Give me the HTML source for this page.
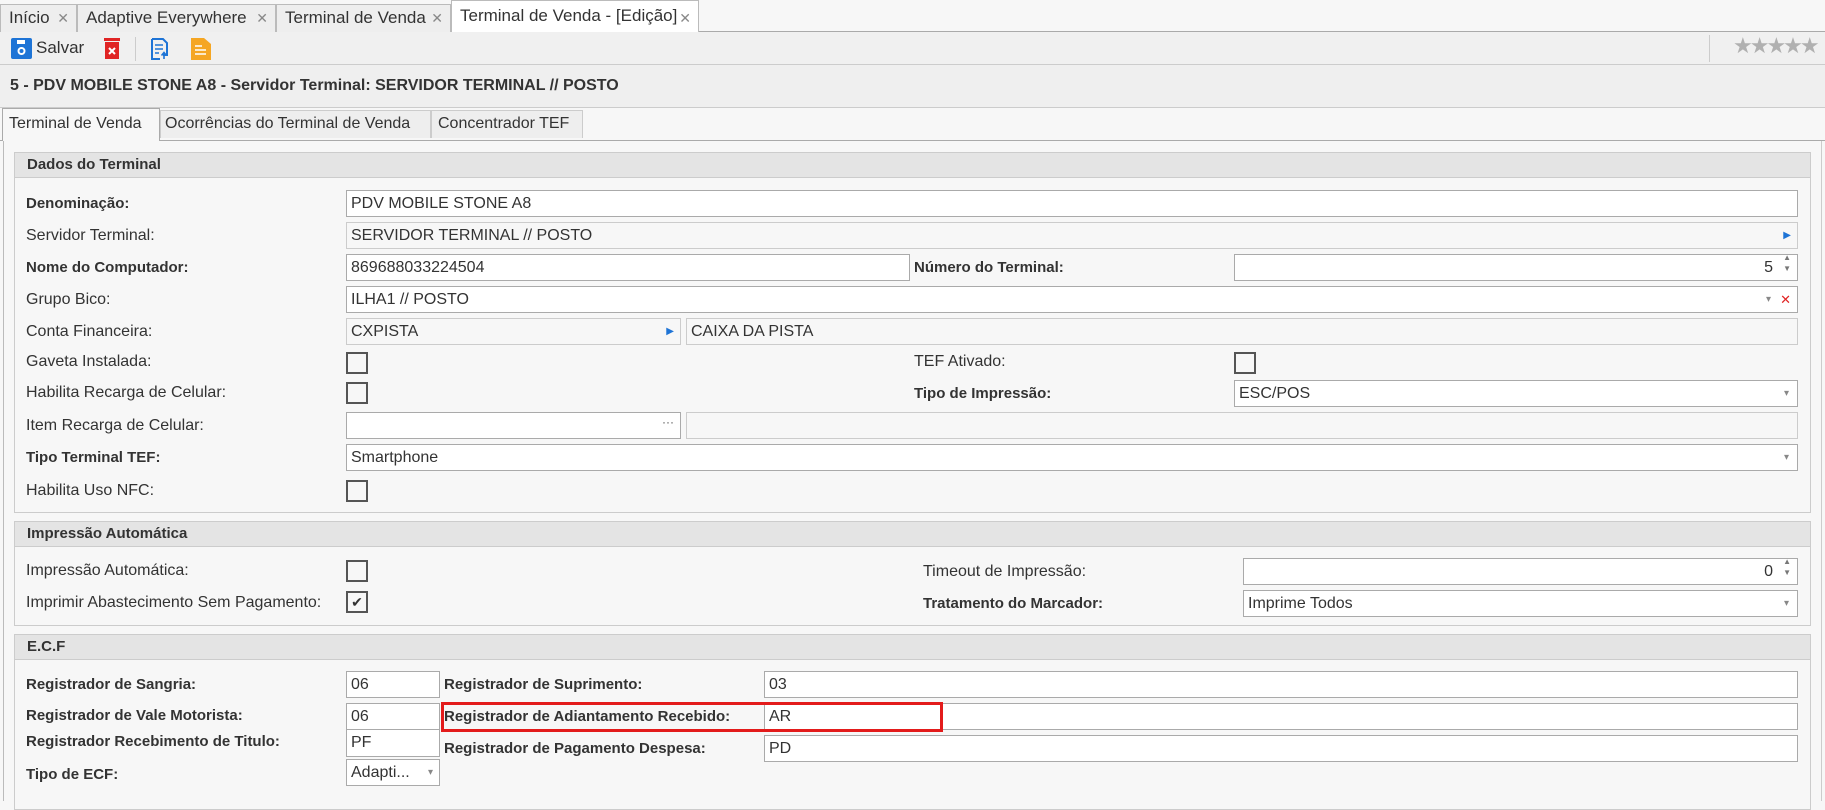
<!DOCTYPE html>
<html><head><meta charset="utf-8"><style>
*{box-sizing:border-box;margin:0;padding:0}
body{width:1825px;height:798px;overflow:hidden;background:#f7f7f7;font-family:"Liberation Sans",sans-serif;color:#333;position:relative;font-size:16px}
.a{position:absolute}
.t{position:absolute;white-space:nowrap;line-height:20px}
.b{font-weight:bold;font-size:15px}
.in{position:absolute;background:#fff;border:1px solid #aaa;height:27px;line-height:25px;padding-left:4px;white-space:nowrap;overflow:hidden}
.ro{background:#f7f7f7;border-color:#ccc}
.cb{position:absolute;width:22px;height:22px;border:2px solid #555;background:#f7f7f7}
.gh{position:absolute;left:14px;width:1797px;background:#e4e4e4;border:1px solid #ccc;height:26px;line-height:24px;padding-left:12px;font-weight:bold;font-size:15px}
.gb{position:absolute;left:14px;width:1797px;border:1px solid #ccc;border-top:none}
.tab{position:absolute;top:4px;height:28px;border:1px solid #bbb;border-bottom:none;background:#eee;line-height:26px;padding-left:8px;font-size:17px;white-space:nowrap}
.x{position:absolute;right:7px;top:0;color:#888;font-size:14px}
.dd{position:absolute;right:8px;top:0;color:#888;font-size:10px}
.st{position:absolute;top:36px;height:28px;border:1px solid #ccc;border-bottom:none;background:#eee;line-height:26px;padding:0 6px;font-size:16px;white-space:nowrap;overflow:hidden}
</style></head><body>
<div class="a" style="left:0;top:0;width:1825px;height:32px;background:#f7f7f7;border-bottom:1px solid #aaa"></div>
<div class="tab" style="left:0;width:77px">Início<span class="x">✕</span></div>
<div class="tab" style="left:77px;width:199px">Adaptive Everywhere<span class="x">✕</span></div>
<div class="tab" style="left:276px;width:175px">Terminal de Venda<span class="x">✕</span></div>
<div class="tab" style="left:451px;top:0;height:33px;width:248px;background:#fff;line-height:30px">Terminal de Venda - [Edição]<span class="x" style="top:2px">✕</span></div>
<div class="a" style="left:0;top:32px;width:1825px;height:33px;background:#f0f0f0;border-bottom:1px solid #ccc"></div>
<svg class="a" style="left:11px;top:38px" width="21" height="21"><rect x="0" y="0" width="21" height="21" rx="2" fill="#1e74d6"/><rect x="6" y="2" width="8" height="4" fill="#fff"/><circle cx="10.5" cy="13" r="3" fill="none" stroke="#fff" stroke-width="2"/></svg>
<div class="t" style="left:36px;top:38px;font-size:17px">Salvar</div>
<svg class="a" style="left:104px;top:38px" width="16" height="21"><rect x="0" y="0" width="16" height="3" fill="#e02424"/><rect x="1" y="4" width="14" height="17" fill="#e02424"/><path d="M5 10l6 6M11 10l-6 6" stroke="#fff" stroke-width="2"/></svg>
<div class="a" style="left:135px;top:37px;width:1px;height:24px;background:#ccc"></div>
<svg class="a" style="left:151px;top:38px" width="18" height="22"><path d="M1 1h11l4 4v12h-4M1 1v20h8" fill="none" stroke="#1e74d6" stroke-width="2"/><path d="M4 7h8M4 11h8M4 15h4M13 21v-6M10.5 17.5l2.5-3 2.5 3" fill="none" stroke="#1e74d6" stroke-width="1.6"/></svg>
<svg class="a" style="left:191px;top:38px" width="20" height="22"><path d="M0 0h13l7 6v16H0z" fill="#f5a623"/><path d="M4 8h7M4 12h11M4 16h11" stroke="#fff" stroke-width="1.6"/></svg>
<div class="a" style="left:1709px;top:35px;width:1px;height:27px;background:#ccc"></div>
<div class="t" style="left:1733px;top:37px;color:#b0b0b0;font-size:22px;letter-spacing:-3px;font-family:'DejaVu Sans',sans-serif">★★★★★</div>
<div class="a" style="left:0;top:65px;width:1825px;height:43px;background:#efefef;border-bottom:1px solid #ccc"></div>
<div class="t" style="left:10px;top:76px;font-weight:bold;font-size:16px">5 - PDV MOBILE STONE A8 - Servidor Terminal: SERVIDOR TERMINAL // POSTO</div>
<div class="a" style="left:0;top:108px;width:1825px;height:33px;background:#f7f7f7;border-bottom:1px solid #aaa"></div>
<div class="a" style="left:0;top:108px;width:1825px;height:32px">
<div class="st" style="left:2px;top:0;height:33px;width:158px;background:#f7f7f7;border-color:#aaa;line-height:30px">Terminal de Venda</div>
<div class="st" style="left:160px;top:2px;width:271px;padding:0 4px">Ocorrências do Terminal de Venda</div>
<div class="st" style="left:431px;top:2px;width:152px">Concentrador TEF</div>
</div>
<div class="a" style="left:3px;top:141px;width:1819px;height:660px;border-left:1px solid #bbb;border-right:1px solid #ccc"></div>

<div class="gh" style="top:152px">Dados do Terminal</div>
<div class="gb" style="top:178px;height:335px"></div>
<div class="t b" style="left:26px;top:194px">Denominação:</div>
<div class="in" style="left:346px;top:190px;width:1452px">PDV MOBILE STONE A8</div>
<div class="t" style="left:26px;top:226px">Servidor Terminal:</div>
<div class="in ro" style="left:346px;top:222px;width:1452px">SERVIDOR TERMINAL // POSTO<span class="a" style="right:6px;top:0;color:#1e74d6;font-size:10px">▶</span></div>
<div class="t b" style="left:26px;top:258px">Nome do Computador:</div>
<div class="in" style="left:346px;top:254px;width:564px">869688033224504</div>
<div class="t b" style="left:914px;top:258px">Número do Terminal:</div>
<div class="in" style="left:1234px;top:254px;width:564px;text-align:right;padding-right:24px">5<span class="a" style="right:6px;top:-3px;color:#777;font-size:8px;line-height:11px">▲<br>▼</span></div>
<div class="t" style="left:26px;top:290px">Grupo Bico:</div>
<div class="in" style="left:346px;top:286px;width:1452px">ILHA1 // POSTO<span class="a" style="right:26px;top:0;color:#888;font-size:10px">▾</span><span class="a" style="right:6px;top:0;color:#e02424;font-size:13px">✕</span></div>
<div class="t" style="left:26px;top:322px">Conta Financeira:</div>
<div class="in ro" style="left:346px;top:318px;width:335px">CXPISTA<span class="a" style="right:6px;top:0;color:#1e74d6;font-size:10px">▶</span></div>
<div class="in ro" style="left:686px;top:318px;width:1112px">CAIXA DA PISTA</div>
<div class="t" style="left:26px;top:352px">Gaveta Instalada:</div>
<div class="cb" style="left:346px;top:352px"></div>
<div class="t" style="left:914px;top:352px">TEF Ativado:</div>
<div class="cb" style="left:1234px;top:352px"></div>
<div class="t" style="left:26px;top:383px">Habilita Recarga de Celular:</div>
<div class="cb" style="left:346px;top:382px"></div>
<div class="t b" style="left:914px;top:384px">Tipo de Impressão:</div>
<div class="in" style="left:1234px;top:380px;width:564px">ESC/POS<span class="dd">▾</span></div>
<div class="t" style="left:26px;top:416px">Item Recarga de Celular:</div>
<div class="in" style="left:346px;top:412px;width:335px"><span class="a" style="right:6px;top:-3px;color:#555;font-size:12px">···</span></div>
<div class="in ro" style="left:686px;top:412px;width:1112px"></div>
<div class="t b" style="left:26px;top:448px">Tipo Terminal TEF:</div>
<div class="in" style="left:346px;top:444px;width:1452px">Smartphone<span class="dd">▾</span></div>
<div class="t" style="left:26px;top:481px">Habilita Uso NFC:</div>
<div class="cb" style="left:346px;top:480px"></div>

<div class="gh" style="top:521px">Impressão Automática</div>
<div class="gb" style="top:547px;height:79px"></div>
<div class="t" style="left:26px;top:561px">Impressão Automática:</div>
<div class="cb" style="left:346px;top:560px"></div>
<div class="t" style="left:923px;top:562px">Timeout de Impressão:</div>
<div class="in" style="left:1243px;top:558px;width:555px;text-align:right;padding-right:24px">0<span class="a" style="right:6px;top:-3px;color:#777;font-size:8px;line-height:11px">▲<br>▼</span></div>
<div class="t" style="left:26px;top:593px">Imprimir Abastecimento Sem Pagamento:</div>
<div class="cb" style="left:346px;top:591px;text-align:center;line-height:18px;font-size:14px;color:#333">✔</div>
<div class="t b" style="left:923px;top:594px">Tratamento do Marcador:</div>
<div class="in" style="left:1243px;top:590px;width:555px">Imprime Todos<span class="dd">▾</span></div>

<div class="gh" style="top:634px">E.C.F</div>
<div class="gb" style="top:660px;height:150px"></div>
<div class="t b" style="left:26px;top:675px">Registrador de Sangria:</div>
<div class="in" style="left:346px;top:671px;width:94px">06</div>
<div class="t b" style="left:444px;top:675px">Registrador de Suprimento:</div>
<div class="in" style="left:764px;top:671px;width:1034px">03</div>
<div class="t b" style="left:26px;top:706px">Registrador de Vale Motorista:</div>
<div class="in" style="left:346px;top:703px;width:94px">06</div>
<div class="t b" style="left:444px;top:707px">Registrador de Adiantamento Recebido:</div>
<div class="in" style="left:764px;top:703px;width:1034px">AR</div>
<div class="a" style="left:441px;top:702px;width:502px;height:30px;border:3px solid #e31b1b"></div>
<div class="t b" style="left:26px;top:732px">Registrador Recebimento de Titulo:</div>
<div class="in" style="left:346px;top:730px;width:94px;border-top:none">PF</div>
<div class="t b" style="left:444px;top:739px">Registrador de Pagamento Despesa:</div>
<div class="in" style="left:764px;top:735px;width:1034px">PD</div>
<div class="t b" style="left:26px;top:765px">Tipo de ECF:</div>
<div class="in" style="left:346px;top:759px;width:94px">Adapti...<span class="dd" style="right:6px">▾</span></div>
</body></html>
